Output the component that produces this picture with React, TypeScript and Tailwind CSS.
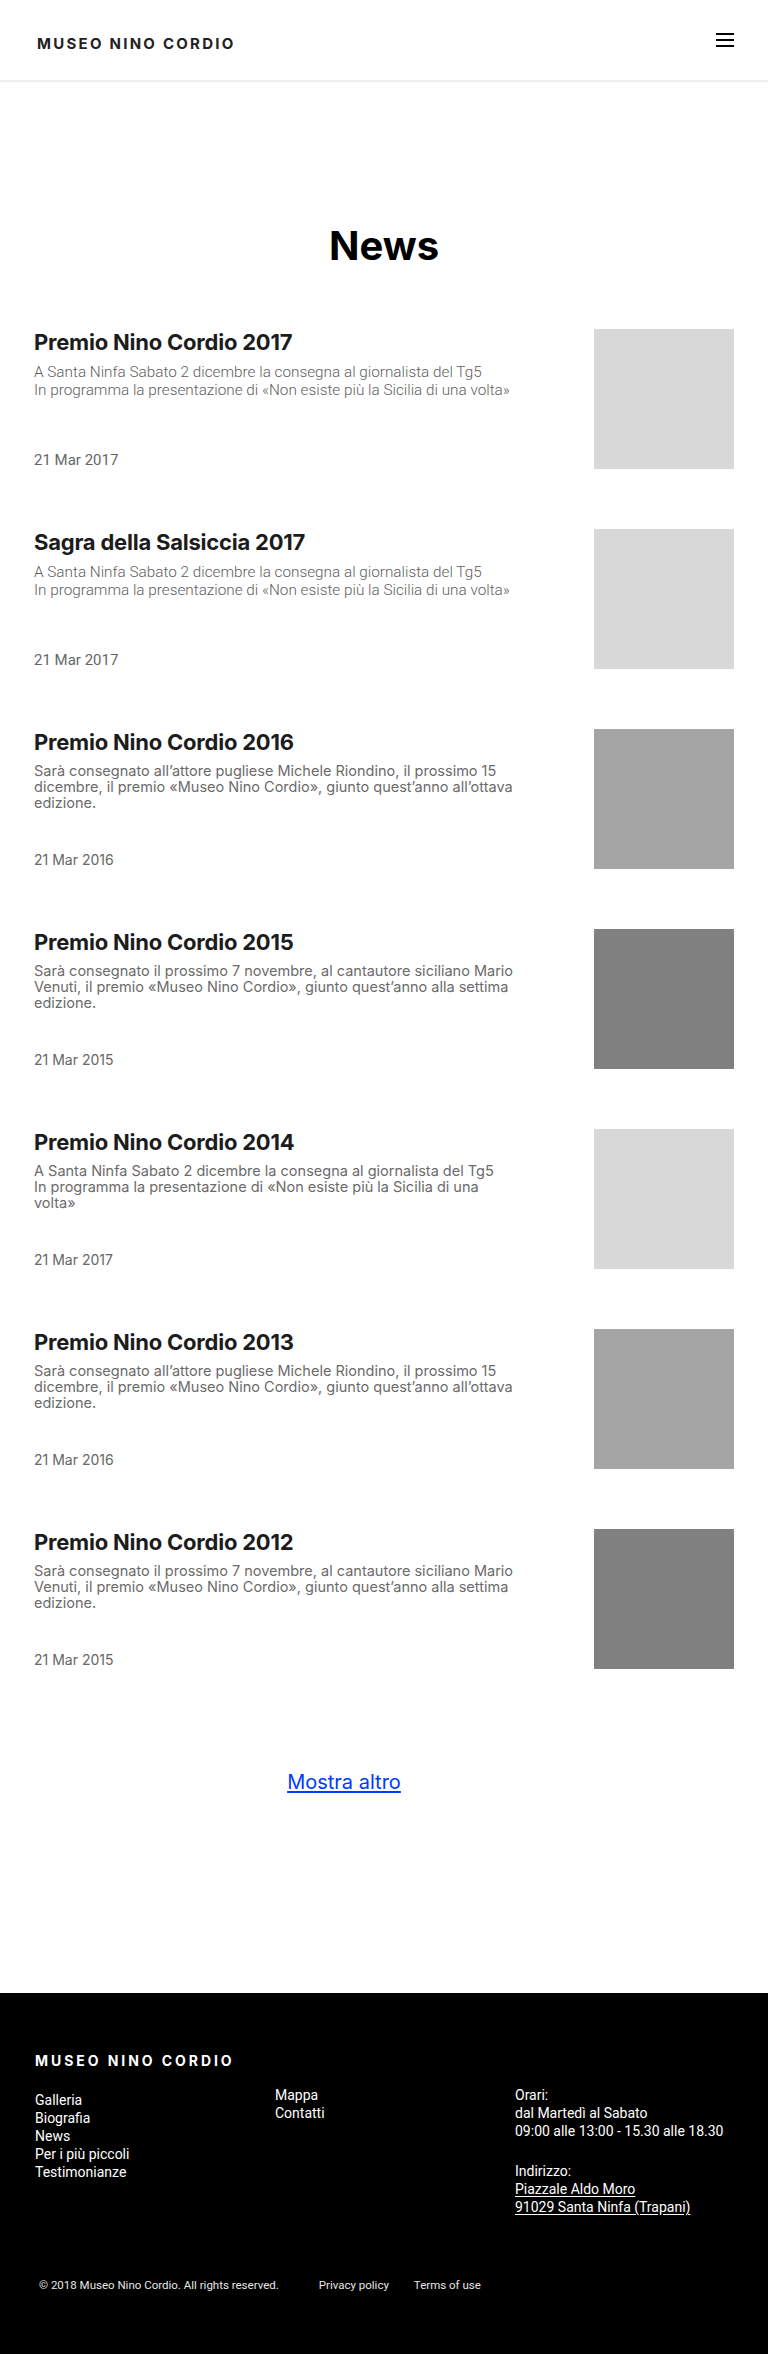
import React from 'react'

// Pagina News — Museo Nino Cordio

interface Notizia {
  id: number
  titolo: string
  testo: string
  data: string
  tono: string
  franklin?: boolean
}

const notizie: Notizia[] = [
  {
    id: 1,
    titolo: 'Premio Nino Cordio 2017',
    testo:
      'A Santa Ninfa Sabato 2 dicembre la consegna al giornalista del Tg5\nIn programma la presentazione di «Non esiste più la Sicilia di una volta»',
    data: '21 Mar 2017',
    tono: 'bg-[#d8d8d8]',
    franklin: true,
  },
  {
    id: 2,
    titolo: 'Sagra della Salsiccia 2017',
    testo:
      'A Santa Ninfa Sabato 2 dicembre la consegna al giornalista del Tg5\nIn programma la presentazione di «Non esiste più la Sicilia di una volta»',
    data: '21 Mar 2017',
    tono: 'bg-[#d8d8d8]',
    franklin: true,
  },
  {
    id: 3,
    titolo: 'Premio Nino Cordio 2016',
    testo:
      'Sarà consegnato all’attore pugliese Michele Riondino, il prossimo 15 dicembre, il premio «Museo Nino Cordio», giunto quest’anno all’ottava edizione.',
    data: '21 Mar 2016',
    tono: 'bg-[#a5a5a5]',
  },
  {
    id: 4,
    titolo: 'Premio Nino Cordio 2015',
    testo:
      'Sarà consegnato il prossimo 7 novembre, al cantautore siciliano Mario Venuti, il premio «Museo Nino Cordio», giunto quest’anno alla settima edizione.',
    data: '21 Mar 2015',
    tono: 'bg-[#808080]',
  },
  {
    id: 5,
    titolo: 'Premio Nino Cordio 2014',
    testo:
      'A Santa Ninfa Sabato 2 dicembre la consegna al giornalista del Tg5\nIn programma la presentazione di «Non esiste più la Sicilia di una volta»',
    data: '21 Mar 2017',
    tono: 'bg-[#d8d8d8]',
  },
  {
    id: 6,
    titolo: 'Premio Nino Cordio 2013',
    testo:
      'Sarà consegnato all’attore pugliese Michele Riondino, il prossimo 15 dicembre, il premio «Museo Nino Cordio», giunto quest’anno all’ottava edizione.',
    data: '21 Mar 2016',
    tono: 'bg-[#a5a5a5]',
  },
  {
    id: 7,
    titolo: 'Premio Nino Cordio 2012',
    testo:
      'Sarà consegnato il prossimo 7 novembre, al cantautore siciliano Mario Venuti, il premio «Museo Nino Cordio», giunto quest’anno alla settima edizione.',
    data: '21 Mar 2015',
    tono: 'bg-[#808080]',
  },
]

const VoceNotizia = ({ n }: { n: Notizia }) => (
  <article className="flex h-[140px] justify-between">
    <div className="flex w-[486px] flex-col justify-between">
      <div>
        <h2 className="text-[22px] leading-[26px] font-bold tracking-[-0.01em] text-[#1c1c1c]">
          {n.titolo}
        </h2>
        {n.franklin ? (
          <p className="mt-[8px] font-['Roboto',sans-serif] text-[15.3px] leading-[18px] font-light whitespace-pre-line text-[#5e5e5e]">
            {n.testo}
          </p>
        ) : (
          <p className="mt-[8px] text-[14.5px] leading-[16px] whitespace-pre-line text-[#6b6b6b]">
            {n.testo}
          </p>
        )}
      </div>
      <p
        className={`text-[14px] leading-[18px] text-[#666] ${
          n.franklin ? "font-['Roboto',sans-serif] text-[15px]" : ''
        }`}
      >
        {n.data}
      </p>
    </div>
    <div className={`h-[140px] w-[140px] shrink-0 ${n.tono}`} />
  </article>
)

export default function App() {
  return (
    <div className="min-h-[2355px] bg-white font-['Inter',sans-serif]">
      {/* header */}
      <header className="flex h-[82px] items-center justify-between border-b-2 border-[#efefef] pr-[34px] pl-[37px]">
        <span className="pt-2 text-[15px] leading-[20px] font-bold tracking-[0.15em] text-[#222]">
          MUSEO NINO CORDIO
        </span>
        <button className="flex w-[18px] flex-col gap-[4px]" aria-label="menu">
          <span className="h-[2px] w-full bg-black" />
          <span className="h-[2px] w-full bg-black" />
          <span className="h-[2px] w-full bg-black" />
        </button>
      </header>

      {/* contenuto */}
      <main className="px-[34px] pt-[140px]">
        <h1 className="text-center text-[40px] leading-[48px] font-bold text-black">News</h1>

        <div className="mt-[59px] flex flex-col gap-[60px]">
          {notizie.map(n => (
            <VoceNotizia key={n.id} n={n} />
          ))}
        </div>

        <div className="mt-[99px] pr-[80px] text-center">
          <a href="#" className="text-[20px] leading-[28px] text-[#0039ff] underline underline-offset-2">
            Mostra altro
          </a>
        </div>
      </main>

      {/* footer */}
      <footer className="mt-[197px] bg-black pt-[58px] pr-[34px] pb-[61px] pl-[35px] font-['Roboto',sans-serif] text-white">
        <p className="font-['Inter',sans-serif] text-[14px] leading-[20px] font-bold tracking-[0.21em]">
          MUSEO NINO CORDIO
        </p>
        <div className="mt-[15px] grid grid-cols-[240px_240px_1fr] text-[14px] leading-[18px]">
          <ul className="mt-[5px]">
            <li>Galleria</li>
            <li>Biografia</li>
            <li>News</li>
            <li>Per i più piccoli</li>
            <li>Testimonianze</li>
          </ul>
          <ul>
            <li>Mappa</li>
            <li>Contatti</li>
          </ul>
          <div>
            <p>Orari:</p>
            <p>dal Martedì al Sabato</p>
            <p>09:00 alle 13:00 - 15.30 alle 18.30</p>
            <p className="mt-[22px]">Indirizzo:</p>
            <a href="#" className="block underline underline-offset-2">
              Piazzale Aldo Moro
            </a>
            <a href="#" className="block underline underline-offset-2">
              91029 Santa Ninfa (Trapani)
            </a>
          </div>
        </div>
        <div className="mt-[61px] flex pl-[4px] text-[11.5px] leading-[16px] text-[#e6e6e6]">
          <span>© 2018 Museo Nino Cordio. All rights reserved.</span>
          <a href="#" className="ml-[40px]">Privacy policy</a>
          <a href="#" className="ml-[25px]">Terms of use</a>
        </div>
      </footer>
    </div>
  )
}
